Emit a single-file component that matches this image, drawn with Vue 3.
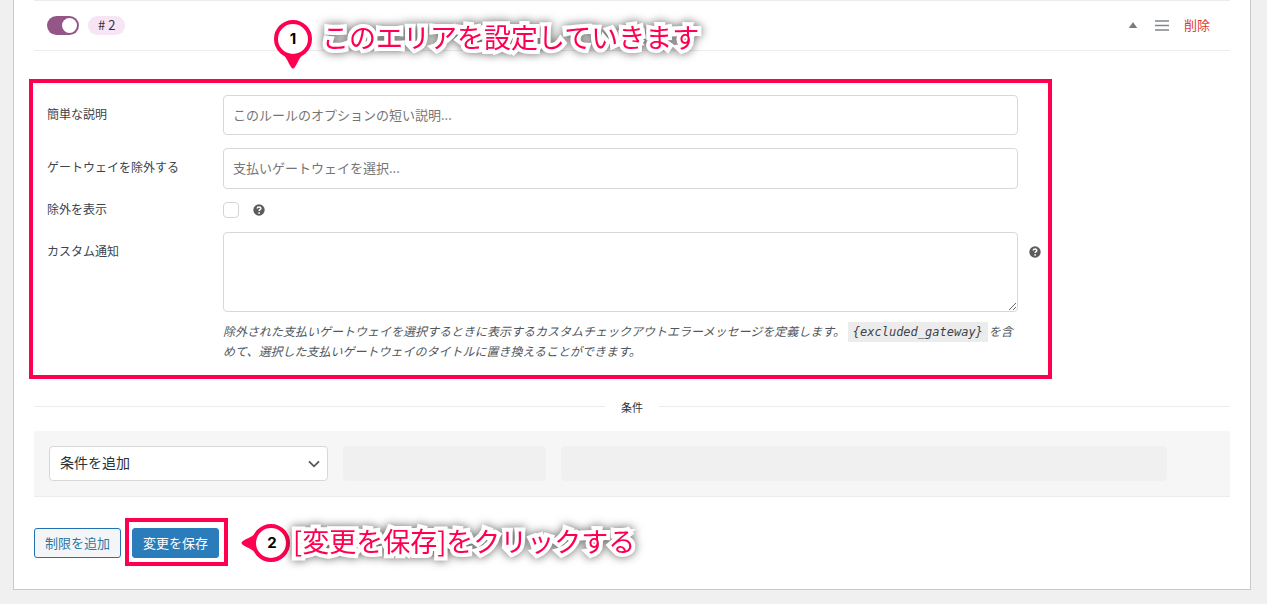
<script setup>
import { ref } from 'vue'

const enabled = ref(true)
const description = ref('')
const gateways = ref('')
const showExcluded = ref(false)
const notice = ref('')
const condition = ref('')
</script>

<template>
  <main class="panel">
    <header class="rule-head">
      <input v-model="enabled" class="toggle" type="checkbox" aria-label="ルールを有効化" />
      <span class="badge"># 2</span>
      <div class="actions">
        <button class="icon-button" type="button" aria-label="折りたたむ">
          <svg width="10" height="8" viewBox="0 0 10 8"><path d="M5 0 9.200 6H.8Z" fill="#787c82" /></svg>
        </button>
        <button class="icon-button" type="button" aria-label="並べ替え">
          <svg width="14" height="12" viewBox="0 0 14 12">
            <path d="M0 1h14M0 5.500h14M0 10h14" stroke="#82868b" stroke-width="1.4" />
          </svg>
        </button>
        <a class="remove" href="#">削除</a>
      </div>
      <div class="callout callout-area">
        <svg class="pin" width="38" height="49" viewBox="0 0 38 49">
          <path d="M6 33C13 36 13 41 17 47Q19 50 21 47C25 41 25 36 32 33Z" fill="#ff0050" />
          <circle cx="19" cy="19" r="17" fill="#fff" stroke="#ff0050" stroke-width="4" />
          <text x="19" y="24" text-anchor="middle">1</text>
        </svg>
        <span class="callout-text">このエリアを設定していきます</span>
      </div>
    </header>

    <form class="settings" @submit.prevent>
      <label class="name" for="description">簡単な説明</label>
      <input id="description" v-model="description" class="field" type="text" placeholder="このルールのオプションの短い説明..." />

      <label class="name" for="gateways">ゲートウェイを除外する</label>
      <input id="gateways" v-model="gateways" class="field field-tall" type="text" placeholder="支払いゲートウェイを選択..." />

      <label class="name name-check" for="show-excluded">除外を表示</label>
      <div class="check-row">
        <input id="show-excluded" v-model="showExcluded" class="check" type="checkbox" />
        <svg class="help" viewBox="0 0 12 12" role="img" aria-label="ヘルプ">
          <circle cx="6" cy="6" r="5.700" fill="#5c5c5c" />
          <path d="M4.200 4.500C4.300 2.400 7.900 2.500 7.800 4.500C7.700 5.700 6.100 5.600 6.100 7" fill="none" stroke="#fff" stroke-width="1.500" />
          <circle cx="6.100" cy="8.900" r=".9" fill="#fff" />
        </svg>
      </div>

      <label class="name" for="notice">カスタム通知</label>
      <div>
        <textarea id="notice" v-model="notice" class="field area"></textarea>
        <p class="hint">
          除外された支払いゲートウェイを選択するときに表示するカスタムチェックアウトエラーメッセージを定義します。 <code>{excluded_gateway}</code>を含めて、選択した支払いゲートウェイのタイトルに置き換えることができます。
        </p>
      </div>
      <svg class="help help-side" viewBox="0 0 12 12" role="img" aria-label="ヘルプ">
        <circle cx="6" cy="6" r="5.700" fill="#5c5c5c" />
        <path d="M4.200 4.500C4.300 2.400 7.900 2.500 7.800 4.500C7.700 5.700 6.100 5.600 6.100 7" fill="none" stroke="#fff" stroke-width="1.500" />
        <circle cx="6.100" cy="8.900" r=".9" fill="#fff" />
      </svg>
    </form>

    <h2 class="divider">条件</h2>

    <section class="conditions">
      <div class="select-wrap">
        <select v-model="condition" class="select" aria-label="条件を追加">
          <option value="">条件を追加</option>
        </select>
        <svg class="chevron" width="12" height="8" viewBox="0 0 12 8">
          <path d="m1 1.300 5 5 5-5" fill="none" stroke="#50575e" stroke-width="1.800" />
        </svg>
      </div>
      <div class="slot"></div>
      <div class="slot"></div>
    </section>

    <footer class="buttons">
      <button class="button" type="button">制限を追加</button>
      <div class="save">
        <button class="button primary" type="button">変更を保存</button>
        <div class="callout callout-save">
          <svg class="pin" width="49" height="38" viewBox="0 0 49 38">
            <path d="M16 6C13 13 8 13 2 17Q-1 19 2 21C8 25 13 25 16 32Z" fill="#ff0050" />
            <circle cx="30" cy="19" r="17" fill="#fff" stroke="#ff0050" stroke-width="4" />
            <text x="31" y="24" text-anchor="middle">2</text>
          </svg>
          <span class="callout-text">[変更を保存]をクリックする</span>
        </div>
      </div>
    </footer>
  </main>
</template>

<style>
body {
  margin: 0;
  background: #f0f0f0;
}
</style>

<style scoped>
.panel,
.panel * {
  box-sizing: border-box;
}
.panel {
  margin: 0 16px 14px 13px;
  padding: 0 20px 31px;
  background: #fff;
  border: solid #c8c9cc;
  border-width: 0 1px 1px;
  color: #2c3338;
  font: 13px/20px "Noto Sans CJK JP", sans-serif;
}
input,
textarea,
select,
button {
  margin: 0;
  font: inherit;
  color: inherit;
}
.rule-head {
  position: relative;
  display: flex;
  align-items: center;
  height: 51px;
  padding: 0 20px 0 13px;
  border: solid #ececec;
  border-width: 1px 0;
}
.toggle {
  appearance: none;
  display: flex;
  width: 32px;
  height: 19px;
  padding: 2px;
  border-radius: 10px;
  background: #935687;
}
.toggle::before {
  content: "";
  width: 15px;
  height: 15px;
  border-radius: 50%;
  background: #fff;
}
.toggle:checked {
  justify-content: flex-end;
}
.badge {
  margin-left: 9px;
  padding: 0 10px 2px;
  border-radius: 10px;
  background: #f7e4f4;
  line-height: 17px;
}
.actions {
  display: flex;
  align-items: center;
  gap: 15px;
  margin-left: auto;
}
.icon-button {
  display: flex;
  padding: 0;
  border: 0;
  background: none;
}
.icon-button:first-child {
  margin-right: 2px;
}
.remove {
  padding-bottom: 2px;
  color: #e2382f;
  text-decoration: none;
}
.callout {
  position: absolute;
  z-index: 1;
  display: flex;
  align-items: flex-start;
  white-space: nowrap;
}
.callout-area {
  top: 19px;
  left: 240px;
  gap: 10px;
}
.callout-save {
  top: -4px;
  left: 109px;
  gap: 3px;
}
.pin {
  flex: none;
}
.pin text {
  font: 700 15px Inter, sans-serif;
  fill: #000;
}
.callout-text {
  color: #ff0050;
  font-size: 27px;
  line-height: 34px;
  -webkit-text-stroke: 8px #fff;
  paint-order: stroke fill;
  stroke-linejoin: round;
  filter: drop-shadow(0 0 5px rgb(0 0 0 / 60%));
}
.settings {
  display: grid;
  grid-template-columns: 176px 1fr 12px;
  row-gap: 13px;
  margin: 28px 178px 0 -5px;
  padding: 12px 7px 14px 14px;
  border: 4px solid #ff0050;
}
.name {
  grid-column: 1;
  padding-top: 9px;
  color: #3c434a;
  font-size: 12px;
}
.name-check {
  padding: 0 0 3px;
  line-height: 14px;
}
.field {
  display: block;
  width: 100%;
  height: 40px;
  padding: 0 9px 2px;
  border: 1px solid #d8d8d8;
  border-radius: 4px;
  background: #fff;
}
.field-tall {
  height: 41px;
}
.field::placeholder {
  color: #757575;
  opacity: 1;
}
.area {
  height: 80px;
  resize: vertical;
}
.check-row {
  display: flex;
  align-items: center;
  gap: 14px;
  height: 16px;
}
.check {
  appearance: none;
  width: 16px;
  height: 16px;
  border: 1px solid #d5d5d5;
  border-radius: 4px;
  background: #fff;
}
.help {
  width: 12px;
  height: 12px;
}
.help-side {
  margin-top: 14px;
}
.settings > .field,
.settings > div {
  grid-column: 2;
  width: auto;
  margin-right: 11px;
}
.hint {
  margin: 9px 0 0;
  color: #50575e;
  font-size: 12px;
  font-style: italic;
}
.hint code {
  margin-right: 1px;
  padding: 3px 5px;
  background: #ececec;
  color: #3c434a;
  font: italic 12px/14px "DejaVu Sans Mono", monospace;
}
.divider {
  display: flex;
  align-items: center;
  gap: 16px;
  margin: 20px 0 16px;
  font-size: 11px;
  font-weight: 400;
  line-height: 16px;
}
.divider::before,
.divider::after {
  content: "";
  flex: 1;
  height: 1px;
  margin-bottom: 1px;
  background: #ececec;
}
.conditions {
  display: grid;
  grid-template-columns: 279fr 203fr 606fr;
  gap: 15px;
  padding: 15px 63px 15px 15px;
  border-bottom: 1px solid #ececec;
  background: #f6f6f6;
}
.select-wrap {
  position: relative;
}
.select {
  appearance: none;
  display: block;
  width: 100%;
  height: 35px;
  padding: 0 30px 4px 10px;
  border: 1px solid #d8d8d8;
  border-radius: 4px;
  background: #fff;
  font-size: 14px;
}
.chevron {
  position: absolute;
  top: 14px;
  right: 8px;
  pointer-events: none;
}
.slot {
  border-radius: 4px;
  background: #f0f0f0;
}
.buttons {
  display: flex;
  gap: 11px;
  margin-top: 31px;
}
.save {
  position: relative;
}
.save::after {
  content: "";
  position: absolute;
  inset: -10px -9px -8px -7px;
  border: 4px solid #ff0050;
  pointer-events: none;
}
.button {
  display: block;
  height: 30px;
  padding: 0 10px;
  border: 1px solid #2271b1;
  border-radius: 3px;
  background: #f3f5f6;
  color: #2a78a8;
  line-height: 28px;
}
.primary {
  border-color: #2a7cba;
  background: #2a7cba;
  color: #fff;
}
</style>
